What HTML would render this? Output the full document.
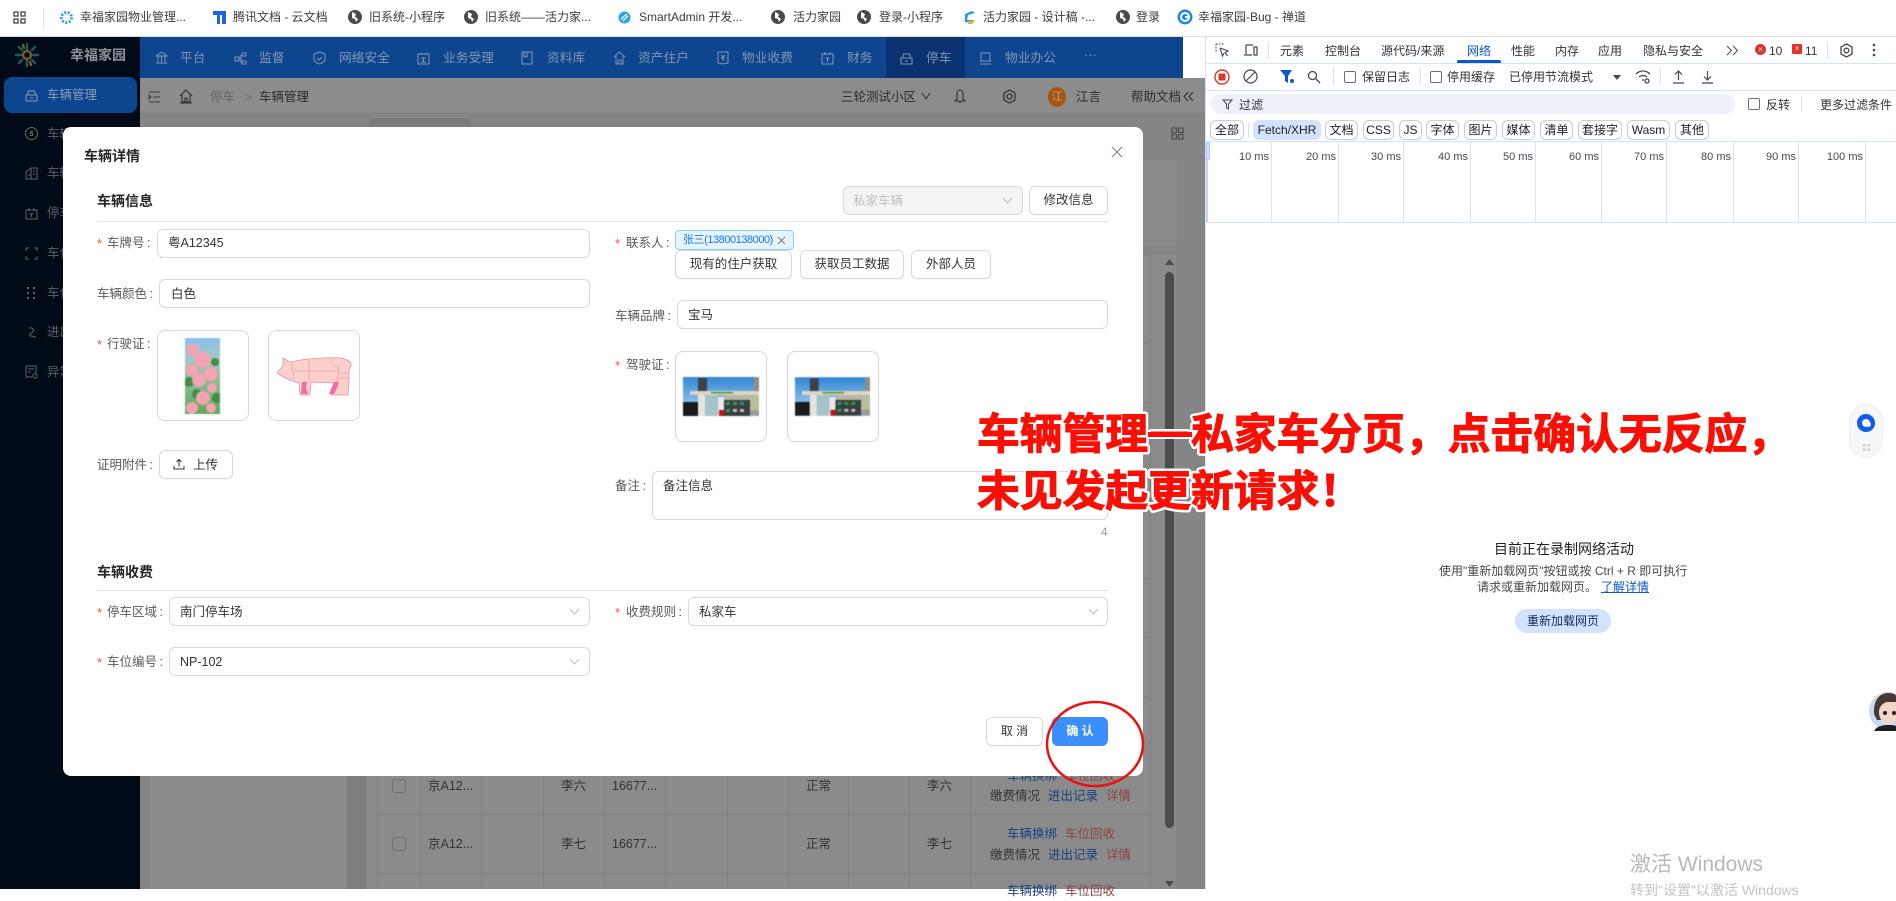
<!DOCTYPE html>
<html lang="zh"><head><meta charset="utf-8"><title>车辆管理</title>
<style>
html,body{margin:0;padding:0;width:1896px;height:889px;overflow:hidden;background:#fff;font-family:"Liberation Sans","Noto Sans CJK SC",sans-serif;font-size:12.5px;color:#333}
div,span,svg{position:absolute}
.t{white-space:nowrap;line-height:20px;height:20px}
.b{box-sizing:border-box;border:1px solid #d9d9d9;border-radius:6px;background:#fff}
.btn{box-sizing:border-box;border:1px solid #d9d9d9;border-radius:6px;background:#fff;text-align:center;color:#333;line-height:27px;box-shadow:0 1px 1px rgba(0,0,0,.03);white-space:nowrap}
.bm{font-size:12px;color:#3c3c3c;top:7px}
.nav{font-size:12.75px;color:#8496b0;top:48px}
.side{font-size:12.5px;color:#5a6169}
.lab{color:#595959;font-size:12.5px}
.star{color:#ff4d4f;font-size:13px}
.val{color:#333;font-size:12.5px}
.dev{font-size:12px;color:#303338}
.chip{box-sizing:border-box;top:120px;height:20px;border:1px solid #c9ccd1;border-radius:6px;text-align:center;font-size:12px;line-height:18px;color:#202124;white-space:nowrap;background:#fff}
.tick{top:150px;font-size:11px;color:#45484d;text-align:right;width:50px;white-space:nowrap;line-height:14px}
.vl{top:141px;height:81px;width:1px;background:#d6e2fb}
.tc{color:#333;font-size:12.5px}
.bl{color:#19407e;font-size:12.5px}
.rd{color:#8d4343;font-size:12.5px}
.hl{background:#808080;height:1px;left:377px;width:773px}
.cv{background:#808080;width:1px;top:755px;height:134px}
.cb{box-sizing:border-box;left:392px;width:14px;height:14px;border:1px solid #6f6f6f;border-radius:3px}
.ic{fill:none;stroke:currentColor;stroke-width:1}
.chk{box-sizing:border-box;width:12px;height:12px;border:1px solid #6b6e73;border-radius:2px;background:#fff}
</style></head><body>

<!-- Bookmarks bar -->
<div style="left:0;top:0;width:1896px;height:36px;background:#fff;border-bottom:1px solid #dedede"></div>
<svg style="left:13px;top:11px" width="13" height="14" fill="none" stroke="#444" stroke-width="1.3"><rect x="1" y="1" width="4" height="4"/><rect x="8" y="1" width="4" height="4"/><rect x="1" y="8" width="4" height="4"/><rect x="8" y="8" width="4" height="4"/></svg>
<div style="left:43px;top:8px;width:1px;height:20px;background:#d3e3fd"></div>

<svg style="left:59px;top:10px" width="15" height="15"><circle cx="7.5" cy="7.5" r="5" fill="none" stroke="#3aa7b5" stroke-width="3" stroke-dasharray="2 1.5"/></svg>
<div class="t bm" style="left:80px">幸福家园物业管理...</div>
<svg style="left:212px;top:9px" width="15" height="17"><path d="M1 2h13v13h-4V6H8v9H5V6H1z" fill="#1a66e0"/></svg>
<div class="t bm" style="left:233px">腾讯文档 - 云文档</div>
<svg style="left:348px;top:10px" width="14" height="14"><circle cx="7" cy="7" r="7" fill="#4a4a4a"/><path d="M4 2l4 2-1 3 3 2-2 3-1-3-3-1z" fill="#fff"/></svg>
<div class="t bm" style="left:369px">旧系统-小程序</div>
<svg style="left:464px;top:10px" width="14" height="14"><circle cx="7" cy="7" r="7" fill="#4a4a4a"/><path d="M4 2l4 2-1 3 3 2-2 3-1-3-3-1z" fill="#fff"/></svg>
<div class="t bm" style="left:485px">旧系统——活力家...</div>
<svg style="left:618px;top:11px" width="13" height="13"><circle cx="6.5" cy="6.5" r="6" fill="#29a5e8"/><path d="M3 8l6-5M5 10l5-5" stroke="#fff" stroke-width="1.3"/></svg>
<div class="t bm" style="left:639px">SmartAdmin 开发...</div>
<svg style="left:771px;top:10px" width="14" height="14"><circle cx="7" cy="7" r="7" fill="#4a4a4a"/><path d="M4 2l4 2-1 3 3 2-2 3-1-3-3-1z" fill="#fff"/></svg>
<div class="t bm" style="left:793px">活力家园</div>
<svg style="left:857px;top:10px" width="14" height="14"><circle cx="7" cy="7" r="7" fill="#4a4a4a"/><path d="M4 2l4 2-1 3 3 2-2 3-1-3-3-1z" fill="#fff"/></svg>
<div class="t bm" style="left:879px">登录-小程序</div>
<svg style="left:962px;top:10px" width="14" height="14"><path d="M3 4l7-3 3 2-7 2-1 5 7 0-3 3-6-1z" fill="#1b9af5"/><path d="M6 11h7l-3 3H6z" fill="#f5b31b"/></svg>
<div class="t bm" style="left:983px">活力家园 - 设计稿 -...</div>
<svg style="left:1116px;top:10px" width="14" height="14"><circle cx="7" cy="7" r="7" fill="#4a4a4a"/><path d="M4 2l4 2-1 3 3 2-2 3-1-3-3-1z" fill="#fff"/></svg>
<div class="t bm" style="left:1136px">登录</div>
<svg style="left:1177px;top:9px" width="16" height="16"><circle cx="8" cy="8" r="7.5" fill="#1e88e5"/><circle cx="8" cy="8" r="4" fill="none" stroke="#fff" stroke-width="2"/><rect x="8" y="7" width="4" height="2" fill="#fff"/></svg>
<div class="t bm" style="left:1198px">幸福家园-Bug - 禅道</div>

<!-- App background -->
<div style="left:0;top:37px;width:140px;height:852px;background:#010b17"></div>
<div style="left:140px;top:37px;width:1043px;height:41px;background:#0d458f"></div>
<div style="left:1183px;top:37px;width:22px;height:41px;background:#fff"></div>
<div style="left:886px;top:37px;width:79px;height:41px;background:#0a3170"></div>
<div style="left:140px;top:78px;width:1065px;height:811px;background:#858585"></div>
<div style="left:140px;top:78px;width:1065px;height:35px;background:#8c8c8c;border-bottom:1px solid #7f7f7f"></div>
<div style="left:369px;top:118px;width:102px;height:12px;background:#7b7b7b;border-radius:4px 4px 0 0"></div>
<div style="left:150px;top:160px;width:1027px;height:85px;background:#8b8b8b"></div>
<div style="left:150px;top:255px;width:197px;height:634px;background:#8b8b8b"></div>
<div style="left:347px;top:255px;width:19px;height:634px;background:#7d7d7d"></div>
<div style="left:366px;top:255px;width:811px;height:634px;background:#8b8b8b"></div>
<div style="left:1150px;top:255px;width:1px;height:634px;background:#808080"></div>
<div style="left:1177px;top:255px;width:1px;height:634px;background:#7f7f7f"></div>
<!-- scrollbar -->
<div style="left:1165px;top:272px;width:9px;height:556px;background:#4b4b4b;border-radius:5px"></div>
<svg style="left:1165px;top:259px" width="9" height="8"><path d="M4.5 0L9 6H0z" fill="#4b4b4b"/></svg>
<svg style="left:1165px;top:881px" width="9" height="7"><path d="M4.5 6L9 0H0z" fill="#4b4b4b"/></svg>
<!-- table -->
<div class="hl" style="top:343px"></div><div class="hl" style="top:402px"></div><div class="hl" style="top:460px"></div><div class="hl" style="top:578px"></div><div class="hl" style="top:637px"></div><div class="hl" style="top:696px"></div><div class="hl" style="top:755px"></div><div class="hl" style="top:814px"></div><div class="hl" style="top:873px"></div>
<div class="cv" style="left:377px"></div><div class="cv" style="left:420px"></div><div class="cv" style="left:481px"></div><div class="cv" style="left:543px"></div><div class="cv" style="left:604px"></div><div class="cv" style="left:665px"></div><div class="cv" style="left:727px"></div><div class="cv" style="left:788px"></div><div class="cv" style="left:848px"></div><div class="cv" style="left:909px"></div><div class="cv" style="left:970px"></div>
<div class="cb" style="top:779px"></div><div class="cb" style="top:837px"></div>
<div class="t tc" style="left:428px;top:776px">京A12...</div><div class="t tc" style="left:561px;top:776px">李六</div><div class="t tc" style="left:612px;top:776px">16677...</div><div class="t tc" style="left:806px;top:776px">正常</div><div class="t tc" style="left:927px;top:776px">李六</div>
<div class="t bl" style="left:1007px;top:766px">车辆换绑</div><div class="t rd" style="left:1065px;top:766px">车位回收</div>
<div class="t tc" style="left:990px;top:786px">缴费情况</div><div class="t bl" style="left:1048px;top:786px">进出记录</div><div class="t rd" style="left:1106px;top:786px">详情</div>
<div class="t tc" style="left:428px;top:834px">京A12...</div><div class="t tc" style="left:561px;top:834px">李七</div><div class="t tc" style="left:612px;top:834px">16677...</div><div class="t tc" style="left:806px;top:834px">正常</div><div class="t tc" style="left:927px;top:834px">李七</div>
<div class="t bl" style="left:1007px;top:824px">车辆换绑</div><div class="t rd" style="left:1065px;top:824px">车位回收</div>
<div class="t tc" style="left:990px;top:845px">缴费情况</div><div class="t bl" style="left:1048px;top:845px">进出记录</div><div class="t rd" style="left:1106px;top:845px">详情</div>
<div class="t bl" style="left:1007px;top:881px">车辆换绑</div><div class="t rd" style="left:1065px;top:881px">车位回收</div>

<!-- Sidebar -->
<svg style="left:14px;top:42px" width="26" height="26" fill="none" stroke-width="2.4" stroke-linecap="round"><circle cx="13" cy="13" r="4" stroke="#7d5a25"/><path d="M13 2v5M13 19v5M2 13h5M19 13h5" stroke="#185f65"/><path d="M5 5l3 3M21 5l-3 3M5 21l3-3M21 21l-3-3" stroke="#185f65"/><path d="M9 3l1 3M17 23l-1-3" stroke="#7d5a25"/></svg>
<div class="t" style="left:70px;top:45px;font-size:14px;font-weight:700;color:#8e9297">幸福家园</div>
<div style="left:4px;top:77px;width:133px;height:36px;background:#0d458f;border-radius:8px"></div>
<svg class="ic" style="left:25px;top:89px;color:#8b9cb5" width="13" height="13"><path d="M2.5 6l1-4h6l1 4M1 6h11v6H1zM5 9h3"/></svg>
<div class="t side" style="left:47px;top:85px;color:#8b9cb5">车辆管理</div>
<svg class="ic" style="left:25px;top:127px;color:#666" width="13" height="13"><circle cx="6.5" cy="6.5" r="6"/><path d="M8.5 4.5H5.5v2h2v2H4.5"/></svg><div class="t side" style="left:47px;top:124px">车辆缴费</div>
<svg class="ic" style="left:25px;top:167px;color:#666" width="13" height="13"><path d="M1 5l5-4h6v11H1zM6 1v11M3 8h3M8 4h2M8 7h2"/></svg><div class="t side" style="left:47px;top:163px">车辆记录</div>
<svg class="ic" style="left:25px;top:207px;color:#666" width="13" height="13"><path d="M1 3h11v9H1zM4 1v3M9 1v3M5 6l1.5 2L8 6M6.5 8v2"/></svg><div class="t side" style="left:47px;top:203px">停车场</div>
<svg class="ic" style="left:25px;top:247px;color:#666" width="13" height="13"><path d="M1 4V1h3M9 1h3v3M12 9v3H9M4 12H1V9"/></svg><div class="t side" style="left:47px;top:243px">车位管理</div>
<svg style="left:27px;top:287px" width="9" height="13" fill="#666"><rect x="0" y="0" width="2" height="2"/><rect x="6" y="0" width="2" height="2"/><rect x="0" y="5" width="2" height="2"/><rect x="6" y="5" width="2" height="2"/><rect x="0" y="10" width="2" height="2"/><rect x="6" y="10" width="2" height="2"/></svg><div class="t side" style="left:47px;top:283px">车位分配</div>
<svg class="ic" style="left:26px;top:326px;color:#666" width="12" height="13"><path d="M3 2c5-1 6 4 2 5-3 1-1 4 5 4"/></svg><div class="t side" style="left:47px;top:322px">进出记录</div>
<svg class="ic" style="left:25px;top:365px;color:#666" width="13" height="14"><path d="M1 1h10v8M1 1v11h6M3 4h6M3 7h3"/><circle cx="10" cy="11" r="2.2"/></svg><div class="t side" style="left:47px;top:362px">异常记录</div>

<!-- Top nav -->
<svg class="ic" style="left:155px;top:51px;color:#8496b0" width="13" height="14"><path d="M1 5l5.500-4L12 5zM3 5v6M6.500 5v6M10 5v6M1 12h11"/></svg><div class="t nav" style="left:180px">平台</div>
<svg class="ic" style="left:234px;top:52px;color:#8496b0" width="13" height="13"><rect x="1" y="5" width="4" height="4"/><rect x="8" y="1" width="4" height="3"/><rect x="8" y="9" width="4" height="3"/><path d="M5 7h2M7 3v8"/></svg><div class="t nav" style="left:259px">监督</div>
<svg class="ic" style="left:313px;top:51px;color:#8496b0" width="13" height="14"><path d="M6.500 1L12 3v5c0 3-3 4-5.500 5C4 12 1 11 1 8V3zM4 7l2 2 3-3"/></svg><div class="t nav" style="left:339px">网络安全</div>
<svg class="ic" style="left:417px;top:52px;color:#8496b0" width="13" height="13"><path d="M1 2h11v10H1zM4 1v2M9 1v2M4 6h5M6.500 6v4M4 10h5"/></svg><div class="t nav" style="left:443px">业务受理</div>
<svg class="ic" style="left:521px;top:51px;color:#8496b0" width="12" height="14"><path d="M1 1h10v12H1zM3 1v5l1.500-1L6 6V1"/></svg><div class="t nav" style="left:547px">资料库</div>
<svg class="ic" style="left:613px;top:51px;color:#8496b0" width="13" height="14"><path d="M1 6l5.500-5L12 6M3 5v8h7V5M5 13V9h3v4"/></svg><div class="t nav" style="left:638px">资产住户</div>
<svg class="ic" style="left:717px;top:51px;color:#8496b0" width="12" height="14"><path d="M1 1h10v11l-5 1-5-1zM4 4l2 2 2-2M6 6v4M4 7h4"/></svg><div class="t nav" style="left:742px">物业收费</div>
<svg class="ic" style="left:821px;top:51px;color:#8496b0" width="13" height="14"><path d="M1 3h11v10H1zM4 1v3M9 1v3M5 6l1.500 2L8 6M6.500 8v3"/></svg><div class="t nav" style="left:847px">财务</div>
<svg class="ic" style="left:900px;top:52px;color:#8496b0" width="13" height="13"><path d="M2.500 6l1-4h6l1 4M1 6h11v6H1zM5 9h3"/></svg><div class="t nav" style="left:926px">停车</div>
<svg class="ic" style="left:979px;top:52px;color:#8496b0" width="13" height="13"><path d="M2 1h9v8H2zM1 12h11M1 9h11"/></svg><div class="t nav" style="left:1005px">物业办公</div>
<div class="t nav" style="left:1084px;top:45px;color:#7f93ad">···</div>

<!-- Breadcrumb -->
<svg style="left:148px;top:91px" width="13" height="12" fill="none" stroke="#3d3d3d"><path d="M1 1h11M5 6h7M1 11h11M1 4v4l2-2z"/></svg>
<svg style="left:179px;top:89px" width="14" height="15" fill="none" stroke="#2f2f2f" stroke-width="1.1"><path d="M1 7l6-6 6 6M3 6v7h8V6M1 14h12M6 13v-4h2v4"/></svg>
<div class="t" style="left:210px;top:87px;color:#666">停车</div>
<div class="t" style="left:245px;top:87px;color:#666;font-size:12px">&gt;</div>
<div class="t" style="left:259px;top:87px;color:#2d2d2d">车辆管理</div>
<div class="t" style="left:841px;top:87px;color:#2d2d2d">三轮测试小区</div>
<svg style="left:921px;top:92px" width="10" height="8" fill="none" stroke="#2d2d2d"><path d="M1 1l4 6 4-6"/></svg>
<svg style="left:954px;top:89px" width="12" height="15" fill="none" stroke="#2d2d2d" stroke-width="1.1"><path d="M6 1c-2 0-3 2-3 4v5l-2 2h10l-2-2V5c0-2-1-4-3-4zM5 13.500h2"/></svg>
<svg style="left:1002px;top:89px" width="15" height="15" fill="none" stroke="#2d2d2d" stroke-width="1.2"><path d="M7.500 1l5.500 3v7l-5.500 3L2 11V4z"/><circle cx="7.500" cy="7.500" r="2.500"/></svg>
<div style="left:1048px;top:87px;width:18px;height:20px;border-radius:50%;background:#a9540d;color:#b9a18c;font-size:11px;line-height:20px;text-align:center">江</div>
<div class="t" style="left:1076px;top:87px;color:#2d2d2d">江言</div>
<div class="t" style="left:1131px;top:87px;color:#2d2d2d">帮助文档</div>
<svg style="left:1183px;top:91px" width="11" height="11" fill="none" stroke="#2d2d2d"><path d="M5 1L1 5.500 5 10M10 1L6 5.500 10 10"/></svg>
<svg style="left:1171px;top:127px" width="13" height="13" fill="none" stroke="#4d4d4d" stroke-width="1.2"><rect x="1" y="1" width="4.500" height="4.500"/><rect x="7.500" y="1" width="4.500" height="4.500"/><rect x="1" y="7.500" width="4.500" height="4.500"/><rect x="7.500" y="7.500" width="4.500" height="4.500"/></svg>

<!-- Modal -->
<div style="left:63px;top:127px;width:1080px;height:649px;background:#fff;border-radius:8px"></div>
<div class="t" style="left:84px;top:146px;font-size:14px;font-weight:700;color:#262626">车辆详情</div>
<svg style="left:1111px;top:146px" width="12" height="12" stroke="#7f7f7f" stroke-width="1"><path d="M1 1l10 10M11 1L1 11"/></svg>
<div class="t" style="left:97px;top:191px;font-size:14px;font-weight:700;color:#262626">车辆信息</div>
<div style="left:97px;top:221px;width:1011px;height:1px;background:#e4e4e4"></div>

<div class="b" style="left:843px;top:186px;width:180px;height:29px;background:#f5f5f5"></div>
<div class="t" style="left:853px;top:191px;color:#bfbfbf">私家车辆</div>
<svg style="left:1002px;top:197px" width="11" height="7" fill="none" stroke="#bfbfbf"><path d="M1 1l4.500 5L10 1"/></svg>
<div class="btn" style="left:1029px;top:186px;width:79px;height:29px">修改信息</div>

<!-- left column -->
<div class="t star" style="left:97px;top:234px">*</div><div class="t lab" style="left:107px;top:233px">车牌号&#8201;:</div>
<div class="b" style="left:157px;top:229px;width:433px;height:29px"></div><div class="t val" style="left:168px;top:233px">粤A12345</div>
<div class="t lab" style="left:97px;top:284px">车辆颜色&#8201;:</div>
<div class="b" style="left:159px;top:279px;width:431px;height:29px"></div><div class="t val" style="left:171px;top:284px">白色</div>
<div class="t star" style="left:97px;top:335px">*</div><div class="t lab" style="left:107px;top:334px">行驶证&#8201;:</div>
<div class="b" style="left:157px;top:330px;width:92px;height:91px;border-radius:8px"></div>
<div class="b" style="left:268px;top:330px;width:92px;height:91px;border-radius:8px"></div>
<svg style="left:185px;top:338px;filter:blur(.5px)" width="35" height="76"><defs><linearGradient id="fg" x1="0" y1="0" x2="0" y2="1"><stop offset="0" stop-color="#8cc0ee"/><stop offset=".3" stop-color="#a7c8c0"/><stop offset="1" stop-color="#5aa85a"/></linearGradient></defs><rect width="35" height="76" fill="url(#fg)"/><g fill="#3f8f45"><circle cx="4" cy="44" r="5"/><circle cx="12" cy="56" r="5"/><circle cx="32" cy="60" r="5"/><circle cx="30" cy="24" r="4"/></g><g fill="#f4a3b0"><circle cx="8" cy="12" r="6"/><circle cx="18" cy="22" r="8"/><circle cx="7" cy="32" r="6"/><circle cx="26" cy="36" r="7"/><circle cx="14" cy="42" r="7"/><circle cx="27" cy="50" r="5"/><circle cx="18" cy="60" r="7"/><circle cx="7" cy="70" r="6"/><circle cx="26" cy="70" r="5"/></g></svg>
<svg style="left:277px;top:357px" width="76" height="40"><path d="M0 16L6 9L6 1L13 5C25 2 50 0 65 1C70 3 74 4 74 8L72 14L72 24L71 38L54 38L58 26L34 25L33 38L23 38L22 26C14 24 6 20 0 16Z" fill="#fbd0ca" stroke="#e58fa6" stroke-width=".8"/><path d="M14 5L17 22M32 3V25M55 2C53 6 57 9 62 10M17 14H62M62 10L60 26M62 16H72M61 21H72" stroke="#d98aa0" stroke-width=".5" fill="none"/><path d="M25 25h5l-1 6 2 6h-7zM57 25h5l-2 6-3 6h-5z" fill="#ee6fa5"/></svg>
<div class="t lab" style="left:97px;top:455px">证明附件&#8201;:</div>
<div class="btn" style="left:159px;top:450px;width:74px;height:29px"></div>
<svg style="left:173px;top:458px" width="12" height="12" fill="none" stroke="#333"><path d="M1 8v3h10V8M6 8.500V1.500M3.500 4L6 1.500 8.500 4"/></svg>
<div class="t val" style="left:193px;top:455px">上传</div>

<!-- right column -->
<div class="t star" style="left:615px;top:234px">*</div><div class="t lab" style="left:626px;top:233px">联系人&#8201;:</div>
<div style="box-sizing:border-box;left:675px;top:230px;width:119px;height:20px;background:#e6f4ff;border:1px solid #91caff;border-radius:4px"></div>
<div class="t" style="left:683px;top:230px;font-size:11px;letter-spacing:-.45px;color:#1677ff">张三(13800138000)</div>
<svg style="left:777px;top:236px" width="9" height="9" stroke="#7c7c7c"><path d="M1 1l7 7M8 1L1 8"/></svg>
<div class="btn" style="left:675px;top:250px;width:117px;height:29px">现有的住户获取</div>
<div class="btn" style="left:800px;top:250px;width:104px;height:29px">获取员工数据</div>
<div class="btn" style="left:911px;top:250px;width:80px;height:29px">外部人员</div>
<div class="t lab" style="left:615px;top:306px">车辆品牌&#8201;:</div>
<div class="b" style="left:677px;top:300px;width:431px;height:29px"></div><div class="t val" style="left:688px;top:305px">宝马</div>
<div class="t star" style="left:615px;top:356px">*</div><div class="t lab" style="left:626px;top:355px">驾驶证&#8201;:</div>
<div class="b" style="left:675px;top:351px;width:92px;height:91px;border-radius:8px"></div>
<div class="b" style="left:787px;top:351px;width:92px;height:91px;border-radius:8px"></div>
<svg style="left:683px;top:377px;filter:blur(.4px)" width="76" height="39" viewBox="0 0 76 39"><defs><linearGradient id="sk" x1="0" y1="0" x2="0" y2="1"><stop offset="0" stop-color="#2f86d6"/><stop offset="1" stop-color="#b8dcf2"/></linearGradient></defs><rect width="76" height="39" fill="url(#sk)"/><rect x="15" y="1" width="9" height="13" fill="#3c4148"/><rect x="71" y="0" width="5" height="14" fill="#8f8f80"/><rect x="7" y="14" width="69" height="4" fill="#ded5c2"/><rect x="28" y="15" width="22" height="1.500" fill="#3aa03a"/><rect y="25" width="15" height="14" fill="#181b20"/><rect x="15" y="18" width="7" height="21" fill="#e3e6d8"/><rect x="22" y="18" width="13" height="21" fill="#a6c2cb"/><rect x="35" y="20" width="6" height="19" fill="#e8e8e8"/><rect x="36" y="33" width="5" height="6" fill="#c41512"/><rect x="41" y="18" width="26" height="5" fill="#b9b5a6"/><rect x="41" y="23" width="26" height="16" fill="#3a3d3f"/><g fill="#27a04a"><rect x="43" y="25" width="4" height="3"/><rect x="50" y="25" width="4" height="3"/><rect x="57" y="25" width="4" height="3"/><rect x="43" y="32" width="4" height="3"/></g><g fill="#bdbdbd"><rect x="50" y="32" width="4" height="3"/><rect x="57" y="32" width="4" height="3"/></g><rect x="67" y="18" width="9" height="15" fill="#b7bf9a"/><rect x="67" y="33" width="9" height="6" fill="#9b9b9b"/></svg>
<svg style="left:795px;top:377px;filter:blur(.4px)" width="75" height="39" viewBox="0 0 76 39"><rect width="76" height="39" fill="url(#sk)"/><rect x="15" y="1" width="9" height="13" fill="#3c4148"/><rect x="71" y="0" width="5" height="14" fill="#8f8f80"/><rect x="7" y="14" width="69" height="4" fill="#ded5c2"/><rect x="28" y="15" width="22" height="1.500" fill="#3aa03a"/><rect y="25" width="15" height="14" fill="#181b20"/><rect x="15" y="18" width="7" height="21" fill="#e3e6d8"/><rect x="22" y="18" width="13" height="21" fill="#a6c2cb"/><rect x="35" y="20" width="6" height="19" fill="#e8e8e8"/><rect x="36" y="33" width="5" height="6" fill="#c41512"/><rect x="41" y="18" width="26" height="5" fill="#b9b5a6"/><rect x="41" y="23" width="26" height="16" fill="#3a3d3f"/><g fill="#27a04a"><rect x="43" y="25" width="4" height="3"/><rect x="50" y="25" width="4" height="3"/><rect x="57" y="25" width="4" height="3"/><rect x="43" y="32" width="4" height="3"/></g><g fill="#bdbdbd"><rect x="50" y="32" width="4" height="3"/><rect x="57" y="32" width="4" height="3"/></g><rect x="67" y="18" width="9" height="15" fill="#b7bf9a"/><rect x="67" y="33" width="9" height="6" fill="#9b9b9b"/></svg>
<div class="t lab" style="left:615px;top:476px">备注&#8201;:</div>
<div class="b" style="left:652px;top:471px;width:456px;height:49px"></div><div class="t val" style="left:663px;top:476px">备注信息</div>
<div class="t" style="left:1101px;top:522px;font-size:12px;color:#9a9a9a">4</div>

<!-- fee -->
<div class="t" style="left:97px;top:562px;font-size:14px;font-weight:700;color:#262626">车辆收费</div>
<div style="left:97px;top:590px;width:1011px;height:1px;background:#e4e4e4"></div>
<div class="t star" style="left:97px;top:603px">*</div><div class="t lab" style="left:107px;top:602px">停车区域&#8201;:</div>
<div class="b" style="left:169px;top:597px;width:421px;height:29px"></div><div class="t val" style="left:180px;top:602px">南门停车场</div>
<svg style="left:569px;top:608px" width="11" height="7" fill="none" stroke="#bfbfbf"><path d="M1 1l4.500 5L10 1"/></svg>
<div class="t star" style="left:615px;top:603px">*</div><div class="t lab" style="left:626px;top:602px">收费规则&#8201;:</div>
<div class="b" style="left:688px;top:597px;width:420px;height:29px"></div><div class="t val" style="left:699px;top:602px">私家车</div>
<svg style="left:1088px;top:608px" width="11" height="7" fill="none" stroke="#bfbfbf"><path d="M1 1l4.500 5L10 1"/></svg>
<div class="t star" style="left:97px;top:653px">*</div><div class="t lab" style="left:107px;top:652px">车位编号&#8201;:</div>
<div class="b" style="left:169px;top:647px;width:421px;height:29px"></div><div class="t val" style="left:180px;top:652px">NP-102</div>
<svg style="left:569px;top:658px" width="11" height="7" fill="none" stroke="#bfbfbf"><path d="M1 1l4.500 5L10 1"/></svg>
<div class="btn" style="left:986px;top:717px;width:57px;height:29px;font-size:12px">取 消</div>
<div class="btn" style="left:1052px;top:717px;width:56px;height:29px;background:#3a8ffa;border-color:#3a8ffa;color:#fff;font-size:12px;font-weight:700">确 认</div>

<!-- DevTools -->
<div style="left:1205px;top:37px;width:691px;height:852px;background:#fff;border-left:1px solid #d6e2fb"></div>
<div style="left:1206px;top:63px;width:690px;height:1px;background:#d6e2fb"></div>
<div style="left:1206px;top:90px;width:690px;height:1px;background:#d6e2fb"></div>
<div style="left:1206px;top:141px;width:690px;height:1px;background:#d6e2fb"></div>
<div style="left:1206px;top:222px;width:690px;height:1px;background:#d6e2fb"></div>
<svg style="left:1215px;top:43px" width="14" height="15" fill="none" stroke="#45484d" stroke-width="1.1"><path d="M1 1h9M1 1v9M1 1" stroke-dasharray="1.500 1.500"/><path d="M5 5l8 3-3 1.500 2.500 3.500M5 5l2.500 8 1.500-3"/></svg>
<svg style="left:1243px;top:43px" width="15" height="14" fill="none" stroke="#45484d" stroke-width="1.200"><path d="M3 11V2h7M1 12h8M11 4h3v8h-3z"/></svg>
<div style="left:1268px;top:42px;width:1px;height:16px;background:#d6e2fb"></div>
<div class="t dev" style="left:1280px;top:41px">元素</div><div class="t dev" style="left:1325px;top:41px">控制台</div><div class="t dev" style="left:1381px;top:41px">源代码/来源</div>
<div class="t dev" style="left:1467px;top:41px;color:#0b57d0">网络</div><div style="left:1457px;top:60px;width:44px;height:3px;background:#0b57d0;border-radius:2px 2px 0 0"></div>
<div class="t dev" style="left:1511px;top:41px">性能</div><div class="t dev" style="left:1555px;top:41px">内存</div><div class="t dev" style="left:1598px;top:41px">应用</div><div class="t dev" style="left:1643px;top:41px">隐私与安全</div>
<svg style="left:1726px;top:45px" width="13" height="11" fill="none" stroke="#45484d"><path d="M1 1l4.500 4.500L1 10M7 1l4.500 4.500L7 10"/></svg>
<div style="left:1755px;top:44px;width:11px;height:11px;border-radius:50%;background:#dc362e;color:#fff;font-size:8px;line-height:11px;text-align:center">×</div>
<div class="t dev" style="left:1769px;top:41px">10</div>
<div style="left:1792px;top:44px;width:10px;height:10px;background:#e5302b;border-radius:1px;color:#fff;font-size:8px;line-height:10px;text-align:center">×</div>
<div class="t dev" style="left:1805px;top:41px">11</div>
<div style="left:1827px;top:42px;width:1px;height:16px;background:#d6e2fb"></div>
<svg style="left:1839px;top:43px" width="15" height="15" fill="none" stroke="#45484d" stroke-width="1.300"><path d="M7.500 1l5.500 3v7l-5.500 3L2 11V4z"/><circle cx="7.500" cy="7.500" r="2.300"/></svg>
<svg style="left:1872px;top:43px" width="4" height="14" fill="#45484d"><circle cx="2" cy="2" r="1.300"/><circle cx="2" cy="7" r="1.300"/><circle cx="2" cy="12" r="1.300"/></svg>

<svg style="left:1214px;top:69px" width="16" height="16"><circle cx="8" cy="8" r="7" fill="none" stroke="#dc362e" stroke-width="1.400"/><rect x="4.500" y="4.500" width="7" height="7" rx="1" fill="#dc362e"/></svg>
<svg style="left:1243px;top:69px" width="15" height="15" fill="none" stroke="#45484d" stroke-width="1.200"><circle cx="7.500" cy="7.500" r="6.500"/><path d="M3 12l9-9"/></svg>
<svg style="left:1280px;top:70px" width="15" height="14"><path d="M0 0h12L8 6v7L5 11V6z" fill="#0b57d0"/><circle cx="12" cy="11" r="2" fill="#0b57d0"/></svg>
<svg style="left:1307px;top:70px" width="14" height="14" fill="none" stroke="#45484d" stroke-width="1.300"><circle cx="5.500" cy="5.500" r="4"/><path d="M8.500 8.500l4.500 4.500"/></svg>
<div style="left:1333px;top:68px;width:1px;height:16px;background:#d6e2fb"></div>
<div class="chk" style="left:1344px;top:71px"></div><div class="t dev" style="left:1362px;top:67px">保留日志</div>
<div style="left:1420px;top:68px;width:1px;height:16px;background:#d6e2fb"></div>
<div class="chk" style="left:1430px;top:71px"></div><div class="t dev" style="left:1447px;top:67px">停用缓存</div>
<div class="t dev" style="left:1509px;top:67px">已停用节流模式</div>
<svg style="left:1613px;top:75px" width="8" height="5"><path d="M0 0h8L4 5z" fill="#45484d"/></svg>
<svg style="left:1635px;top:69px" width="16" height="15" fill="none" stroke="#45484d" stroke-width="1.300"><path d="M1 5c4-4 10-4 14 0M4 8c2.500-2 5.500-2 8 0M7 11h2"/><circle cx="12" cy="12" r="2"/></svg>
<div style="left:1660px;top:68px;width:1px;height:16px;background:#d6e2fb"></div>
<svg style="left:1672px;top:70px" width="13" height="14" fill="none" stroke="#45484d" stroke-width="1.200"><path d="M6.500 10V1M3 4.500L6.500 1 10 4.500M1 13h11"/></svg>
<svg style="left:1701px;top:70px" width="13" height="14" fill="none" stroke="#45484d" stroke-width="1.200"><path d="M6.500 1v9M3 6.500L6.500 10 10 6.500M1 13h11"/></svg>

<div style="left:1211px;top:94px;width:524px;height:20px;background:#edf2fa;border-radius:10px"></div>
<svg style="left:1222px;top:99px" width="11" height="11" fill="none" stroke="#45484d"><path d="M1 1h9L6.500 5v5l-2-1V5z"/></svg>
<div class="t dev" style="left:1239px;top:95px">过滤</div>
<div class="chk" style="left:1748px;top:98px"></div><div class="t dev" style="left:1766px;top:95px">反转</div>
<div style="left:1801px;top:96px;width:1px;height:16px;background:#d6e2fb"></div>
<div class="t dev" style="left:1820px;top:95px">更多过滤条件</div>

<div class="chip" style="left:1210px;width:34px">全部</div>
<div style="left:1248px;top:122px;width:1px;height:16px;background:#d6e2fb"></div>
<div class="chip" style="left:1253px;width:68px;background:#d3e3fd;border-color:#d3e3fd">Fetch/XHR</div>
<div class="chip" style="left:1325px;width:33px">文档</div>
<div class="chip" style="left:1363px;width:31px">CSS</div>
<div class="chip" style="left:1399px;width:23px">JS</div>
<div class="chip" style="left:1426px;width:33px">字体</div>
<div class="chip" style="left:1464px;width:33px">图片</div>
<div class="chip" style="left:1502px;width:33px">媒体</div>
<div class="chip" style="left:1540px;width:33px">清单</div>
<div class="chip" style="left:1578px;width:44px">套接字</div>
<div class="chip" style="left:1627px;width:43px">Wasm</div>
<div class="chip" style="left:1675px;width:34px">其他</div>

<div style="left:1206px;top:142px;width:2px;height:80px;background:#c2d7fb"></div>
<div style="left:1206px;top:142px;width:4px;height:18px;background:#d3e3fd;border-radius:0 2px 2px 0;border:1px solid #a8c7fa;box-sizing:border-box"></div>
<div class="vl" style="left:1271px"></div><div class="vl" style="left:1338px"></div><div class="vl" style="left:1403px"></div><div class="vl" style="left:1470px"></div><div class="vl" style="left:1535px"></div><div class="vl" style="left:1601px"></div><div class="vl" style="left:1666px"></div><div class="vl" style="left:1733px"></div><div class="vl" style="left:1798px"></div><div class="vl" style="left:1865px"></div>
<div class="tick" style="left:1219px">10 ms</div><div class="tick" style="left:1286px">20 ms</div><div class="tick" style="left:1351px">30 ms</div><div class="tick" style="left:1418px">40 ms</div><div class="tick" style="left:1483px">50 ms</div><div class="tick" style="left:1549px">60 ms</div><div class="tick" style="left:1614px">70 ms</div><div class="tick" style="left:1681px">80 ms</div><div class="tick" style="left:1746px">90 ms</div><div class="tick" style="left:1813px">100 ms</div>

<div class="t" style="left:1494px;top:539px;font-size:14px;color:#1f1f1f">目前正在录制网络活动</div>
<div class="t" style="left:1439px;top:561px;font-size:12px;color:#474747">使用"重新加载网页"按钮或按 Ctrl + R 即可执行</div>
<div class="t" style="left:1477px;top:577px;font-size:12px;color:#474747">请求或重新加载网页。</div>
<div class="t" style="left:1601px;top:577px;font-size:12px;color:#0b57d0;text-decoration:underline">了解详情</div>
<div style="left:1515px;top:609px;width:96px;height:24px;background:#d3e3fd;border-radius:12px;text-align:center;line-height:24px;font-size:12px;color:#0a2a5a">重新加载网页</div>

<!-- floating widget -->
<div style="box-sizing:border-box;left:1849px;top:404px;width:34px;height:54px;background:#f6f7f9;border:1px solid #eceef1;border-radius:17px"></div>
<svg style="left:1856px;top:413px" width="20" height="20"><circle cx="10" cy="10" r="6.500" fill="none" stroke="#0f5cf0" stroke-width="5"/><path d="M11 9l4 1-1 4-3-1z" fill="#fff"/></svg>
<svg style="left:1863px;top:444px" width="7" height="7" fill="#c9cbcf"><rect width="2.500" height="2.500"/><rect x="4.500" width="2.500" height="2.500"/><rect y="4.500" width="2.500" height="2.500"/><rect x="4.500" y="4.500" width="2.500" height="2.500"/></svg>
<!-- avatar -->
<svg style="left:1868px;top:692px" width="28" height="39"><circle cx="20" cy="19" r="19" fill="#c8d9f5"/><path d="M6 22C5 8 12 1 20 1c4 0 8 1 8 3v24H9z" fill="#4a3833"/><path d="M11 20c0-6 5-10 9-10h8v18c-3 3-5 4-8 4-5 0-9-5-9-12z" fill="#f5d5c8"/><circle cx="17" cy="21" r="2" fill="#2a1d1a"/><circle cx="26" cy="21" r="2" fill="#2a1d1a"/><path d="M6 39c2-4 7-6 14-6s8 1 8 1v5z" fill="#1e1e1e"/></svg>
<!-- watermark -->
<div class="t" style="left:1630px;top:853px;font-size:21px;line-height:24px;height:24px;color:#b8b8b8">激活 Windows</div>
<div class="t" style="left:1630px;top:880px;font-size:14px;color:#c4c4c4">转到"设置"以激活 Windows</div>

<!-- red ellipse annotation -->
<svg style="left:1040px;top:695px" width="110" height="98"><ellipse cx="55" cy="49" rx="48" ry="42" fill="none" stroke="#f10d0d" stroke-width="2.500"/></svg>

<!-- annotation text -->
<svg style="left:960px;top:395px" width="840" height="135" font-family="'Noto Sans CJK SC','Liberation Sans',sans-serif" font-weight="700" font-size="42.800">
<text x="17" y="54" fill="#fff" stroke="#fff" stroke-width="6" stroke-linejoin="round">车辆管理—私家车分页，点击确认无反应，</text>
<text x="17" y="111" fill="#fff" stroke="#fff" stroke-width="6" stroke-linejoin="round">未见发起更新请求！</text>
<rect x="186" y="35" width="48" height="9" rx="2" fill="#fff"/>
<text x="17" y="54" fill="#fb0f05" stroke="#fb0f05" stroke-width="1">车辆管理—私家车分页，点击确认无反应，</text>
<text x="17" y="111" fill="#fb0f05" stroke="#fb0f05" stroke-width="1">未见发起更新请求！</text>
<rect x="188" y="37" width="44" height="5" fill="#fb0f05"/>
</svg>
</body></html>
